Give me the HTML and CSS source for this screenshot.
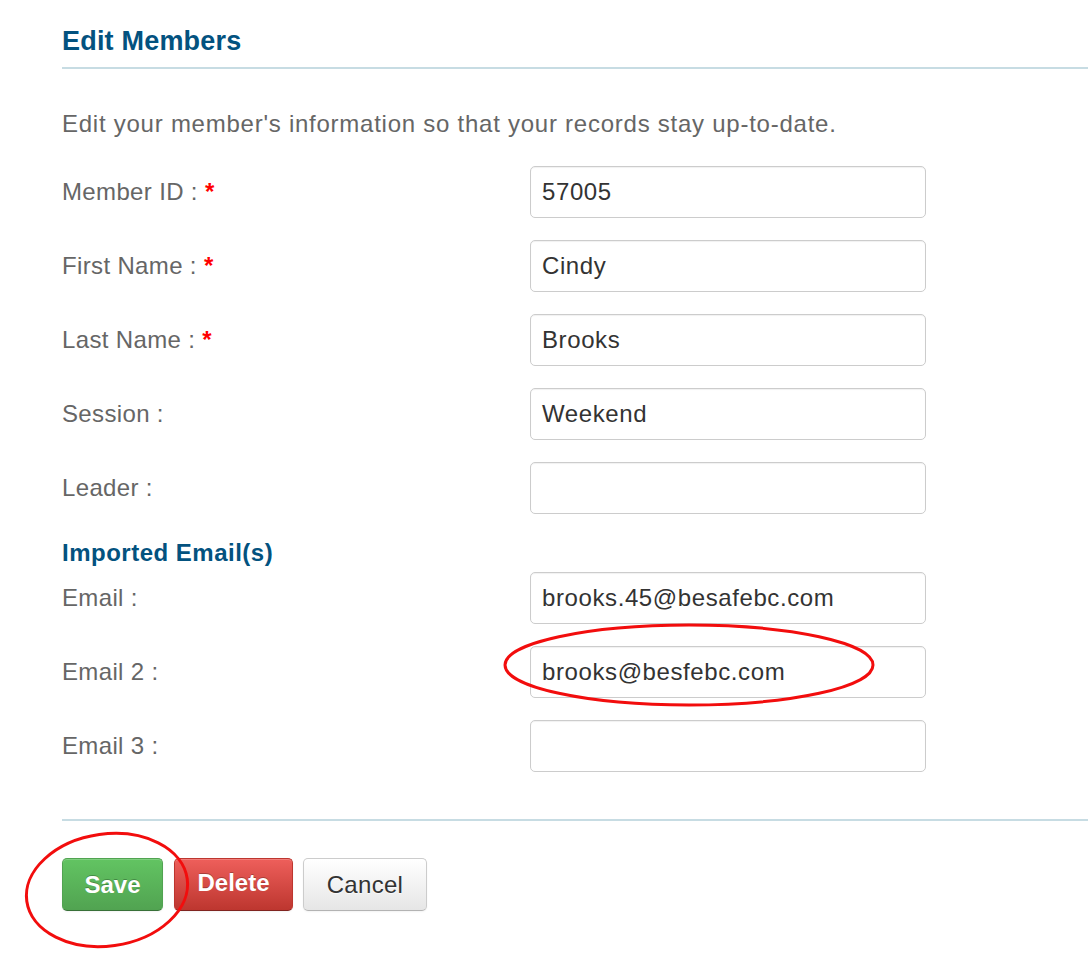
FILE: index.html
```html
<!DOCTYPE html>
<html>
<head>
<meta charset="utf-8">
<link rel="stylesheet" href="styles.css">
</head>
<body>
<div class="page">
  <h1 class="title">Edit Members</h1>
  <div class="rule"></div>
  <p class="intro">Edit your member's information so that your records stay up-to-date.</p>
  <div class="fields">
    <div class="row"><label class="lbl">Member ID : <span class="req">*</span></label><div class="input">57005</div></div>
    <div class="row"><label class="lbl">First Name : <span class="req">*</span></label><div class="input">Cindy</div></div>
    <div class="row"><label class="lbl">Last Name : <span class="req">*</span></label><div class="input">Brooks</div></div>
    <div class="row"><label class="lbl">Session :</label><div class="input">Weekend</div></div>
    <div class="row"><label class="lbl">Leader :</label><div class="input"></div></div>
  </div>
  <h2 class="subhead">Imported Email(s)</h2>
  <div class="fields">
    <div class="row"><label class="lbl">Email :</label><div class="input">brooks.45@besafebc.com</div></div>
    <div class="row"><label class="lbl">Email 2 :</label><div class="input">brooks@besfebc.com</div></div>
    <div class="row"><label class="lbl">Email 3 :</label><div class="input"></div></div>
  </div>
  <div class="rule rule-bottom"></div>
  <div class="actions">
    <button class="btn btn-save">Save</button>
    <button class="btn btn-delete">Delete</button>
    <button class="btn btn-cancel">Cancel</button>
  </div>
</div>
<svg class="marks" width="1088" height="962" viewBox="0 0 1088 962">
  <ellipse cx="689" cy="665" rx="184" ry="40" fill="none" stroke="#f20d0d" stroke-width="3"/>
  <ellipse cx="107" cy="890" rx="81" ry="56" fill="none" stroke="#f20d0d" stroke-width="3" transform="rotate(-8 107 890)"/>
</svg>
</body>
</html>
```
FILE: styles.css
```css
html, body {
  margin: 0;
  padding: 0;
  background: #fff;
}
body {
  font-family: "Liberation Sans", Arial, Helvetica, sans-serif;
  position: relative;
  width: 1088px;
  height: 962px;
  overflow: hidden;
}
.page {
  padding-left: 62px;
}
.title {
  margin: 0;
  padding-top: 25px;
  font-size: 27px;
  line-height: 32px;
  font-weight: bold;
  color: #03527f;
  letter-spacing: 0.2px;
}
.rule {
  height: 2px;
  background: #c7dce3;
  margin-top: 10px;
}
.intro {
  margin: 41px 0 0;
  font-size: 24px;
  line-height: 28px;
  color: #666;
  letter-spacing: 0.75px;
}
.fields {
  display: flex;
  flex-direction: column;
  gap: 22px;
}
.intro + .fields {
  margin-top: 28px;
}
.row {
  display: flex;
  align-items: center;
}
.lbl {
  width: 468px;
  font-size: 24px;
  color: #666;
  letter-spacing: 0.35px;
}
.req {
  color: #f00;
  font-weight: bold;
}
.input {
  box-sizing: border-box;
  width: 396px;
  height: 52px;
  border: 1px solid #ccc;
  border-radius: 5px;
  padding: 0 11px;
  display: flex;
  align-items: center;
  font-size: 24px;
  color: #333;
  letter-spacing: 0.6px;
  box-shadow: inset 0 1px 1px rgba(0,0,0,0.06);
}
.subhead {
  margin: 25px 0 5px;
  font-size: 24px;
  line-height: 28px;
  font-weight: bold;
  color: #03527f;
  letter-spacing: 0.5px;
}
.rule-bottom {
  margin-top: 47px;
}
.actions {
  display: flex;
  gap: 10px;
  margin-top: 37px;
}
.btn {
  height: 53px;
  padding: 0;
  font-family: "Liberation Sans", Arial, sans-serif;
  font-size: 24px;
  border-radius: 5px;
  border: 1px solid;
  box-shadow: inset 0 1px 0 rgba(255,255,255,0.2), 0 1px 2px rgba(0,0,0,0.05);
}
.btn-save {
  width: 101px;
  color: #fff;
  font-weight: bold;
  background: linear-gradient(#62c462, #51a351);
  border-color: #51a351 #51a351 #387038;
  text-shadow: 0 -1px 0 rgba(0,0,0,0.25);
}
.btn-delete {
  width: 119px;
  margin-left: 1px;
  padding-bottom: 3px;
  color: #fff;
  font-weight: bold;
  background: linear-gradient(#ee5f5b, #bd362f);
  border-color: #bd362f #bd362f #802420;
  text-shadow: 0 -1px 0 rgba(0,0,0,0.25);
}
.btn-cancel {
  width: 124px;
  color: #333;
  background: linear-gradient(#ffffff, #e6e6e6);
  border-color: #ccc #ccc #b3b3b3;
  text-shadow: 0 1px 1px rgba(255,255,255,0.75);
  letter-spacing: 0.3px;
}
.marks {
  position: absolute;
  left: 0;
  top: 0;
  pointer-events: none;
}
```
